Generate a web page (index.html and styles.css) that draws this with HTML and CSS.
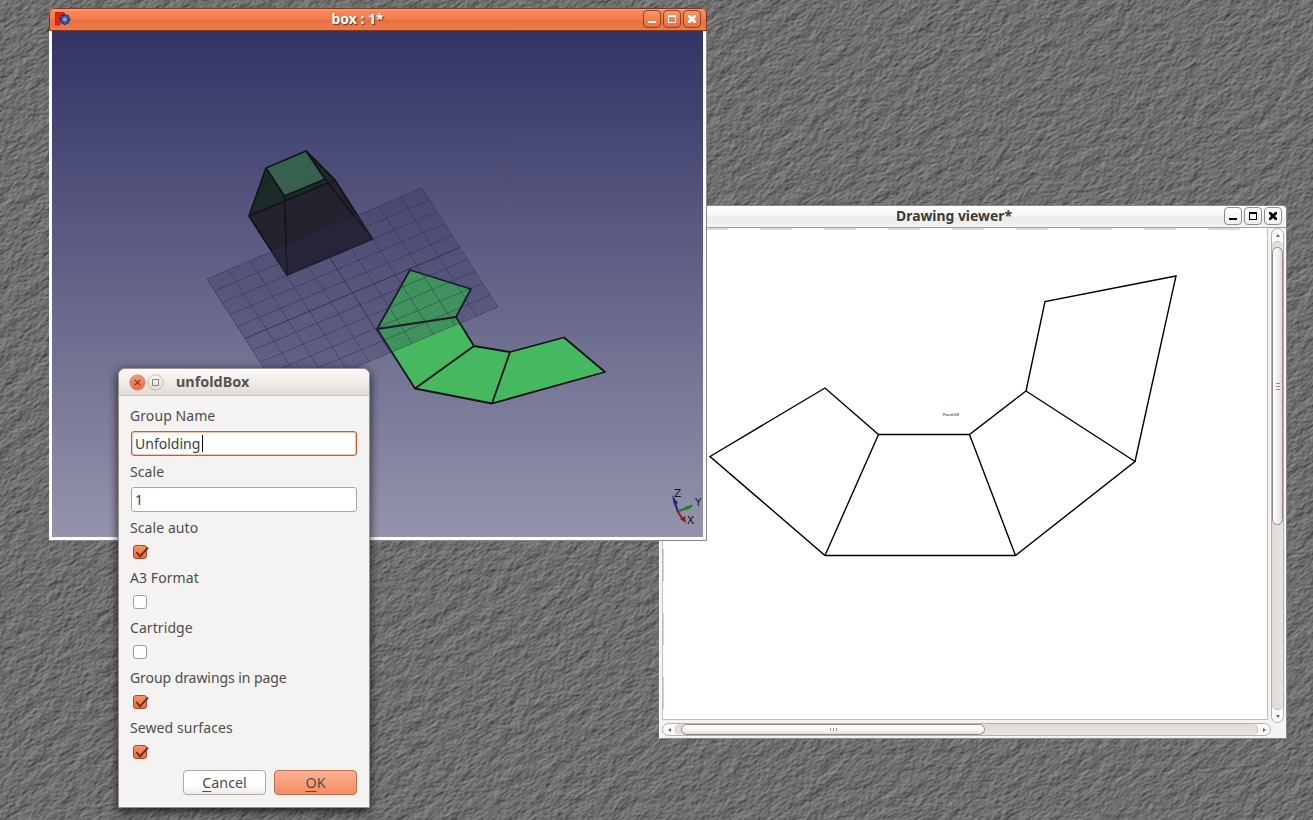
FILE: index.html
```
<!DOCTYPE html>
<html lang="en">
<head>
<meta charset="utf-8">
<title>unfoldBox</title>
<link rel="stylesheet" href="styles.css">
</head>
<body>
<main class="desktop">
  <svg class="wallpaper" width="1313" height="820" viewBox="0 0 1313 820">
    <defs>
      <filter id="stone" x="0" y="0" width="100%" height="100%" color-interpolation-filters="sRGB">
        <feTurbulence type="fractalNoise" baseFrequency="0.06 0.1" numOctaves="6" seed="7" result="n"/>
        <feDiffuseLighting in="n" surfaceScale="1.5" diffuseConstant="0.6" lighting-color="#fff" result="coarse">
          <feDistantLight azimuth="260" elevation="46"/>
        </feDiffuseLighting>
        <feTurbulence type="fractalNoise" baseFrequency="0.22 0.42" numOctaves="3" seed="3" result="f"/>
        <feDiffuseLighting in="f" surfaceScale="1.7" diffuseConstant="0.6" lighting-color="#fff" result="fine">
          <feDistantLight azimuth="260" elevation="46"/>
        </feDiffuseLighting>
        <feComposite in="coarse" in2="fine" operator="arithmetic" k2="0.6" k3="0.42"/>
      </filter>
    </defs>
    <g transform="rotate(-32 656 410)"><rect x="-200" y="-400" width="1720" height="1620" filter="url(#stone)"/></g>
  </svg>

  <section class="window drawing">
    <header class="titlebar titlebar-light">
      <h1 class="title">Drawing viewer*</h1>
      <div class="controls">
        <span class="ctl"><svg viewBox="0 0 18 18"><path d="M5 11h8v2H5z"/></svg></span>
        <span class="ctl"><svg viewBox="0 0 18 18"><path fill-rule="evenodd" d="M5 5h8v8H5zM6 7v5h6V7z"/></svg></span>
        <span class="ctl"><svg viewBox="0 0 18 18"><path d="M5 5h2l2 2 2-2h2v2l-2 2 2 2v2h-2l-2-2-2 2H5v-2l2-2-2-2z"/></svg></span>
      </div>
    </header>
    <div class="drawing-body">
      <div class="page">
        <svg class="unfold" width="604" height="491" viewBox="663 228 604 491">
          <path class="ticks" d="M663 229H1267"/>
          <path class="side-ticks" d="M663.500 229V719"/>
          <path class="edges" d="M825 388L710 456.500L825 555.500H1015.500L1135 461.500L1026 391L969.500 434.500H878.500ZM878.500 434.500L825 555.500M969.500 434.500L1015.500 555.500M1026 391L1045 301.500L1176 276L1135 461.500"/>
          <text class="face-label" x="943" y="415.500" textLength="16">Face018</text>
        </svg>
      </div>
      <div class="vbar">
        <span class="arrow-up"></span>
        <span class="vtrack"><span class="vthumb"><i class="grip grip-v"></i></span></span>
        <span class="arrow-down"></span>
      </div>
      <div class="hbar">
        <span class="arrow-left"></span>
        <span class="htrack"><span class="hthumb"><i class="grip grip-h"></i></span></span>
        <span class="arrow-right"></span>
      </div>
    </div>
  </section>

  <section class="window model">
    <header class="titlebar titlebar-orange">
      <svg class="app-icon" width="18" height="18" viewBox="0 0 18 18">
        <path d="M1.500 2.500h8.500v2.800H5.500V7.500H8v3H5.500v4.500h-4z" fill="#f21d0b" stroke="#9e2410" stroke-width=".8"/>
        <path d="M10 4.200h1.600l.5 1.900 1.800-1 1.200 1.200-1 1.800 1.900.5v1.600l-1.900.5 1 1.800-1.200 1.200-1.800-1-.5 1.900H10l-.5-1.900-1.800 1-1.200-1.200 1-1.800-1.900-.5V8.600l1.900-.5-1-1.800 1.200-1.200 1.800 1z" fill="#2c5cc4" stroke="#122860" stroke-width=".8"/>
        <circle cx="10.800" cy="9.400" r="1.600" fill="#f68054" stroke="#82a8e4" stroke-width=".8"/>
      </svg>
      <h1 class="title">box : 1*</h1>
      <div class="controls">
        <span class="ctl"><svg viewBox="0 0 18 18"><path d="M5 11h8v2H5z"/></svg></span>
        <span class="ctl"><svg viewBox="0 0 18 18"><path fill-rule="evenodd" d="M5 5h8v8H5zM6 7v5h6V7z"/></svg></span>
        <span class="ctl"><svg viewBox="0 0 18 18"><path d="M5 5h2l2 2 2-2h2v2l-2 2 2 2v2h-2l-2-2-2 2H5v-2l2-2-2-2z"/></svg></span>
      </div>
    </header>
    <svg class="view3d" width="651" height="506" viewBox="52 31 651 506">
      <!-- Truncated box -->
      <g class="solid">
        <path d="M249 216L266 168L306 151L335 180L372.500 239L287 275Z" fill="#24222f"/>
        <path d="M249 216L266 168L306 151L335 180Z" fill="#1a2b27"/>
        <path d="M266 168L306 151L325 179L284.500 196Z" fill="#38604f"/>
      </g>
      <!-- Unfolded faces -->
      <path d="M410 270L471 289L456 317L474 346L510 352L564 337.500L605 372L492 403.500L415 388.500L377 329Z" fill="#45b860"/>
      <g class="outline">
        <path d="M249 216L266 168L306 151L335 180L372.500 239L287 275ZM266 168L284.500 196L287 275M284.500 196L325 179L306 151M249 216L335 180M325 179L372.500 239"/>
        <path d="M410 270L471 289L456 317L474 346L510 352L564 337.500L605 372L492 403.500L415 388.500L377 329ZM377 329L456 317M415 388.500L474 346M492 403.500L510 352"/>
      </g>
      <!-- Working plane grid, 100 x 100 units -->
      <g transform="matrix(2.15 -.91 .76 1.19 207 279)">
        <path d="M0 0H100V100H0Z" fill="#3c3c60" opacity=".12"/>
        <g class="minor">
          <path d="M0 50H100"/>
          <path d="M50 0V100"/>
        </g>
        <g class="major">
          <path d="M0 0H100M0 10H100M0 20H100M0 30H100M0 40H100M0 60H100M0 70H100M0 80H100M0 90H100M0 100H100"/>
          <path d="M0 0V100M10 0V100M20 0V100M30 0V100M40 0V100M60 0V100M70 0V100M80 0V100M90 0V100M100 0V100"/>
        </g>
        <path class="axis" d="M0 50H100M50 0V100"/>
      </g>
      <!-- Axis cross -->
      <g class="cross">
        <path d="M678 512L674 500" stroke="#23238a"/><path d="M672 495l6 8-4 2z" fill="#23238a"/>
        <path d="M679 511L688 507.500" stroke="#1f7d23"/><path d="M686 506.500l7-2-1 2.500-5 3z" fill="#1f7d23"/>
        <path d="M678 512L682 518" stroke="#842020"/><path d="M680 519l5-3 1 7z" fill="#842020"/>
        <text x="674" y="497">Z</text><text x="695" y="506">Y</text><text x="687" y="524">X</text>
      </g>
    </svg>
  </section>

  <form class="window dialog">
    <header class="dialog-title">
      <svg class="dialog-buttons" width="36" height="20" viewBox="0 0 36 20">
        <defs>
          <linearGradient id="closeFill" x2="0" y2="1"><stop stop-color="#fa9a77"/><stop offset="1" stop-color="#e9673a"/></linearGradient>
          <linearGradient id="maxFill" x2="0" y2="1"><stop stop-color="#fbfaf8"/><stop offset="1" stop-color="#dedad4"/></linearGradient>
        </defs>
        <circle cx="9.500" cy="10.500" r="7.700" fill="url(#closeFill)" stroke="#c69a87"/>
        <path d="M6.800 7.800l5.400 5.400m0-5.400l-5.400 5.400" stroke="#713b27" stroke-width="1.200"/>
        <circle cx="27.500" cy="10.500" r="7.700" fill="url(#maxFill)" stroke="#c5beb6"/>
        <path d="M24.500 7.500h6v6h-6z" fill="none" stroke="#85807a"/>
      </svg>
      <h1 class="dialog-name">unfoldBox</h1>
    </header>
    <div class="fields">
      <label class="label">Group Name</label>
      <div class="input focused"><span>Unfolding</span><i class="caret"></i></div>
      <label class="label">Scale</label>
      <div class="input"><span>1</span></div>
      <label class="label">Scale auto</label>
      <div class="check-row"><span class="check on"><svg viewBox="0 0 18 16"><path d="M3.500 7l3.500 4.500L15 2.500"/></svg></span></div>
      <label class="label">A3 Format</label>
      <div class="check-row"><span class="check"></span></div>
      <label class="label">Cartridge</label>
      <div class="check-row"><span class="check"></span></div>
      <label class="label long">Group drawings in page</label>
      <div class="check-row"><span class="check on"><svg viewBox="0 0 18 16"><path d="M3.500 7l3.500 4.500L15 2.500"/></svg></span></div>
      <label class="label">Sewed surfaces</label>
      <div class="check-row"><span class="check on"><svg viewBox="0 0 18 16"><path d="M3.500 7l3.500 4.500L15 2.500"/></svg></span></div>
      <div class="actions">
        <button type="button" class="btn"><span><u>C</u>ancel</span></button>
        <button type="button" class="btn primary"><span><u>O</u>K</span></button>
      </div>
    </div>
  </form>
</main>
</body>
</html>
```
FILE: styles.css
```
* { box-sizing: border-box; }
body { margin: 0; font-family: "Noto Sans", "Open Sans", sans-serif; }
.desktop { position: relative; width: 1313px; height: 820px; overflow: hidden; background: #6b6b6b; }
.wallpaper { display: block; }
.window { position: absolute; display: flex; flex-direction: column; }

.titlebar { display: flex; align-items: center; }
.title { flex: 1; margin: 0; text-align: center; font-size: 13.900px; line-height: 20px; font-weight: 700; }
.controls { display: flex; gap: 2px; }
.ctl { width: 18px; height: 18px; border: 1px solid; border-radius: 4px; display: flex; }
.ctl svg { width: 18px; height: 18px; margin: -1px; flex: none; }

/* Drawing viewer */
.drawing { left: 659px; top: 205px; width: 628px; height: 534px; background: #f5f3f2; border: 1px solid #8b8986; border-left-color: #fff; border-radius: 0 5px 0 0; overflow: hidden; }
.titlebar-light { height: 22px; flex: none; padding: 0 4px 1px 24px; background: linear-gradient(#fff 0, #f6f5f4 48%, #ecebea 52%, #f4f3f2 100%); border-bottom: 1px solid #a49f9b; }
.titlebar-light .title { color: #3c3b37; }
.titlebar-light .ctl { border-color: #8f8d8a; background: linear-gradient(#fff, #f0efee); fill: #000; }
.drawing-body { flex: 1; display: grid; grid-template-columns: 606px 14px; grid-template-rows: 492px 13px; column-gap: 3px; row-gap: 3px; padding-left: 2px; }
.page { background: #fff; border: 1px solid #c5beb4; border-top: 0; overflow: hidden; }
.unfold { display: block; }
.ticks { stroke: #dedad7; stroke-width: 2; stroke-dasharray: 32 32; stroke-dashoffset: 31; fill: none; }
.side-ticks { stroke: #d5cfcb; stroke-dasharray: 32 32; fill: none; }
.edges { fill: none; stroke: #000; stroke-width: 1.400; }
.face-label { font: 4px "Liberation Sans", sans-serif; fill: #111; }

.vbar, .hbar { display: flex; border: 1px solid #b9b1a8; border-radius: 7px; background: #fbfaf9; overflow: hidden; }
.vbar { flex-direction: column; height: 495px; width: 13px; }
.hbar { width: 609px; height: 13px; }
.vtrack { flex: 1; background: linear-gradient(90deg, #dfdad5, #e8e4df); border: 1px solid #c3bbb3; border-width: 1px 0; border-radius: 6px; padding-top: 5px; }
.htrack { flex: 1; display: flex; background: linear-gradient(#dfdad5, #e8e4df); border: 1px solid #c3bbb3; border-width: 0 1px; border-radius: 6px; padding-left: 5px; }
.vthumb { display: flex; align-items: center; justify-content: center; height: 278px; border: 1px solid #96897f; border-radius: 6px; background: linear-gradient(90deg, #fff, #f0eeec 60%, #e0dcd8); }
.hthumb { display: flex; align-items: center; justify-content: center; width: 304px; border: 1px solid #96897f; border-radius: 7px; background: linear-gradient(#fff, #f7f6f5 60%, #e0dcd8); }
.grip-h { width: 7px; height: 3px; background: repeating-linear-gradient(90deg, #96918c 0 1px, transparent 1px 3px); }
.grip-v { width: 4px; height: 7px; background: repeating-linear-gradient(#96918c 0 1px, transparent 1px 3px); }
.arrow-up, .arrow-down { height: 12px; display: flex; align-items: center; justify-content: center; }
.arrow-left, .arrow-right { width: 12px; display: flex; align-items: center; justify-content: center; }
.arrow-up::after { content: ""; border: 2.500px solid transparent; border-top: 0; border-bottom: 3px solid #666; }
.arrow-down::after { content: ""; border: 2.500px solid transparent; border-bottom: 0; border-top: 3px solid #666; }
.arrow-left::after { content: ""; border: 2.500px solid transparent; border-left: 0; border-right: 3px solid #666; }
.arrow-right::after { content: ""; border: 2.500px solid transparent; border-right: 0; border-left: 3px solid #666; }

/* 3D model window */
.model { left: 49px; top: 8px; width: 658px; height: 533px; border-radius: 5px 5px 0 0; background: #fbfaf9; border-right: 1px solid #8a8886; border-bottom: 1px solid #8a8886; }
.titlebar-orange { height: 23px; width: 658px; flex: none; padding: 0 5px 1px 4px; border: 1px solid #7e3a20; border-radius: 5px 5px 0 0; background: linear-gradient(#ff9b71 0, #f98354 15%, #f47d4d 49%, #e8703f 52%, #ee7b4b 100%); }
.titlebar-orange .title { color: #fff; text-shadow: 1px 1px 1px #5c3320; padding: 0 8px; }
.titlebar-orange .ctl { border-color: #8b4529; background: linear-gradient(#ff9264, #e8703f); fill: #fff; }
.view3d { display: block; margin-left: 3px; background: linear-gradient(#333366, #9494ab); }
.outline { fill: none; stroke: #121517; stroke-width: 1.800; stroke-linejoin: round; }
.minor path { fill: none; stroke: #353358; stroke-width: 100; stroke-dasharray: .4 .6; opacity: .22; }
.major, .axis { fill: none; stroke: #2b2944; }
.major path, .axis { vector-effect: non-scaling-stroke; stroke-width: 1; opacity: .42; }
.axis { opacity: .75; }
.cross { fill: none; stroke-width: 2; }
.cross text { font: 10.500px "DejaVu Sans", sans-serif; fill: #111; }

/* Dialog */
.dialog { left: 118px; top: 368px; width: 252px; height: 440px; border: 1px solid #9b958d; border-radius: 7px 7px 0 0; background: #f5f3f2; box-shadow: 0 3px 9px 1px rgba(0, 0, 0, .65); }
.dialog-title { flex: none; display: flex; align-items: center; height: 27px; padding: 0 0 1px 9px; border-bottom: 1px solid #d5c8bf; border-radius: 6px 6px 0 0; background: linear-gradient(#fbfaf9, #e3dcd5); }
.dialog-name { margin: 0 0 0 12px; font-size: 14.400px; line-height: 20px; color: #57534e; }
.fields { display: flex; flex-direction: column; gap: 5px; padding: 10px 12px 0 11px; color: #4c4c4c; font-size: 14px; }
.label { height: 20px; line-height: 20px; white-space: nowrap; letter-spacing: .08px; }
.long { letter-spacing: -.07px; }
.input { display: flex; align-items: center; height: 25px; margin: 0 0 1px 1px; padding-left: 3px; border: 1px solid #aca69d; border-radius: 3px; background: #fff; color: #3c3c3c; }
.focused { border-color: #d3592b; box-shadow: inset 0 0 0 .5px #e58a66; }
.caret { width: 1px; height: 17px; background: #000; margin-left: 2px; }
.check-row { display: flex; height: 20px; padding: 2px 0 0 3px; }
.check { width: 14px; height: 14px; border: 1px solid #a89e94; border-radius: 3px; background: #fff; }
.check.on { border-color: #a54a2a; background: linear-gradient(#fb9168, #ed6c3e); }
.check svg { display: block; width: 18px; height: 16px; margin: -1px; fill: none; stroke: #693420; stroke-width: 2; }
.actions { display: flex; justify-content: flex-end; gap: 8px; margin-top: 2px; }
.btn { width: 83px; height: 25px; padding: 0; border: 1px solid #b2aaa1; border-radius: 4px; background: linear-gradient(#fff 60%, #eeecea); font: inherit; font-size: 14.300px; color: #4c4c4c; line-height: 20px; }
.btn u { text-underline-offset: 3px; text-decoration-thickness: 1px; text-decoration-skip-ink: none; }
.primary { border-color: #b96e50; background: linear-gradient(#fdb092, #f68d63); }
```
